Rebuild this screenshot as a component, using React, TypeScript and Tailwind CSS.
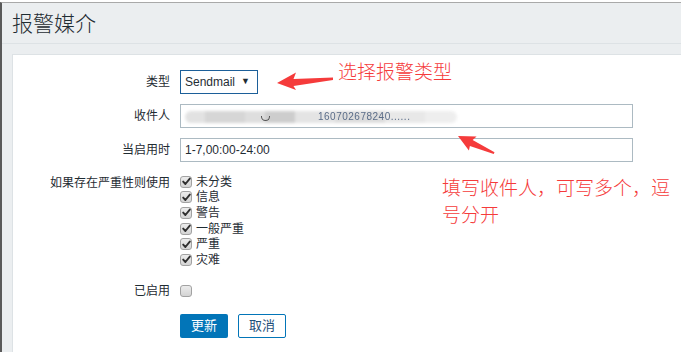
import React from "react";

const CJK = { fontFamily: '"Liberation Sans", "Noto Sans CJK SC", sans-serif' };

function Check({ checked }: { checked: boolean }) {
  return (
    <span className="flex h-[12px] w-[12px] shrink-0 items-center justify-center rounded-[3px] border border-[#a2a2a2] bg-gradient-to-b from-[#ececec] to-[#d4d4d4]">
      {checked && (
        <svg width="9" height="9" viewBox="0 0 9 9">
          <path d="M1.2 4.6 L3.4 7 L7.8 1.6" fill="none" stroke="#2f2f2f" strokeWidth="1.9" strokeLinecap="round" strokeLinejoin="round" />
        </svg>
      )}
    </span>
  );
}

const severities = ["未分类", "信息", "警告", "一般严重", "严重", "灾难"];

export default function App() {
  return (
    <div className="relative h-[352px] w-[681px] overflow-hidden bg-white pt-[2px]" style={CJK}>
      <div className="flex h-[350px] flex-col border-l-2 border-t border-l-[#5a5a5a] border-t-[#a9a9a9] bg-[#ebeef0]">
        <div className="mx-0 flex h-[41px] items-center border-b border-[#dde2e5] pl-[10px]">
          <h1 className="text-[21px] font-light leading-none text-[#1f2c33]">报警媒介</h1>
        </div>
        <div className="ml-[10px] mt-[10px] flex-1 border-l border-t border-[#dde2e5] bg-white pt-[15px] text-[12px] text-[#1f2c33]">
          <div className="flex flex-col">
            {/* 类型 */}
            <div className="flex h-[24px] items-center">
              <div className="w-[157px] text-right">类型</div>
              <div className="ml-[10px] flex h-[24px] w-[78px] items-center justify-between border border-[#1c5f99] pl-[4px] pr-[7px] text-[12px] text-[#1f2c33]">
                <span>Sendmail</span>
                <span className="text-[9px]">▼</span>
              </div>
            </div>
            {/* 收件人 */}
            <div className="mt-[10px] flex h-[24px] items-center">
              <div className="w-[157px] text-right">收件人</div>
              <div className="relative ml-[10px] h-[24px] w-[453px] border border-[#acbac2] bg-white">
                <div className="absolute left-[4px] top-[6px] flex h-[12px] w-[272px] overflow-hidden rounded-full blur-[1.5px]">
                  <span className="h-full w-[20px] bg-[#e2e2e2]" />
                  <span className="h-full w-[40px] bg-[#d6d6d6]" />
                  <span className="h-full w-[20px] bg-[#dedede]" />
                  <span className="h-full w-[30px] bg-[#cdcdcd]" />
                  <span className="h-full w-[40px] bg-[#e4e4e4]" />
                  <span className="h-full w-[50px] bg-[#dcdcdc]" />
                  <span className="h-full w-[40px] bg-[#e8e8e8]" />
                  <span className="h-full w-[32px] bg-[#eeeeee]" />
                </div>
                <span className="absolute left-[137px] top-[4px] text-[10px] tracking-[0.5px] text-[#5a6c88] blur-[0.7px]">160702678240......</span>
                <span className="absolute left-[80px] top-[11px] h-[5px] w-[9px] rounded-b-full border-b border-l border-r border-[#555]" />
              </div>
            </div>
            {/* 当启用时 */}
            <div className="mt-[10px] flex h-[24px] items-center">
              <div className="w-[157px] text-right">当启用时</div>
              <div className="ml-[10px] flex h-[24px] w-[453px] items-center border border-[#acbac2] pl-[4px] text-[12px]">
                1-7,00:00-24:00
              </div>
            </div>
            {/* severity */}
            <div className="mt-[12px] flex">
              <div className="w-[157px] pt-[2px] text-right leading-[14px]">如果存在严重性则使用</div>
              <div className="ml-[10px] flex flex-col">
                {severities.map((s) => (
                  <label key={s} className="flex h-[15.6px] items-center gap-[4px] leading-none">
                    <Check checked />
                    <span>{s}</span>
                  </label>
                ))}
              </div>
            </div>
            {/* 已启用 */}
            <div className="mt-[16px] flex h-[14px] items-center">
              <div className="w-[157px] text-right">已启用</div>
              <div className="ml-[10px]">
                <Check checked={false} />
              </div>
            </div>
            {/* buttons */}
            <div className="mt-[16px] flex">
              <div className="w-[157px]" />
              <div className="ml-[10px] flex gap-[10px]">
                <button className="h-[24px] w-[48px] rounded-[2px] bg-[#0275b8] text-[13px] text-white">更新</button>
                <button className="h-[24px] w-[48px] rounded-[2px] border border-[#0275b8] bg-white text-[13px] text-[#1f4f7a]">取消</button>
              </div>
            </div>
          </div>
        </div>
      </div>

      {/* annotations */}
      <svg className="pointer-events-none absolute left-0 top-0" width="681" height="352">
        <polygon points="277,83 296,72.5 293.5,79 333,77.5 333,80 293.5,86 296,90" fill="#f53b3b" />
        <g transform="translate(458,136) rotate(25)">
          <polygon points="0,0 17,-7.5 15,-2.5 40,-0.6 40,1.2 15,4 16,8.5" fill="#f53b3b" />
        </g>
      </svg>
      <div className="pointer-events-none absolute left-[338px] top-[61px] text-[19px] font-light leading-[24px] text-[#f53b3b]">选择报警类型</div>
      <div className="pointer-events-none absolute left-[442px] top-[175px] text-[19px] font-light leading-[27px] text-[#f53b3b]">
        填写收件人，可写多个，逗
        <br />
        号分开
      </div>
    </div>
  );
}
